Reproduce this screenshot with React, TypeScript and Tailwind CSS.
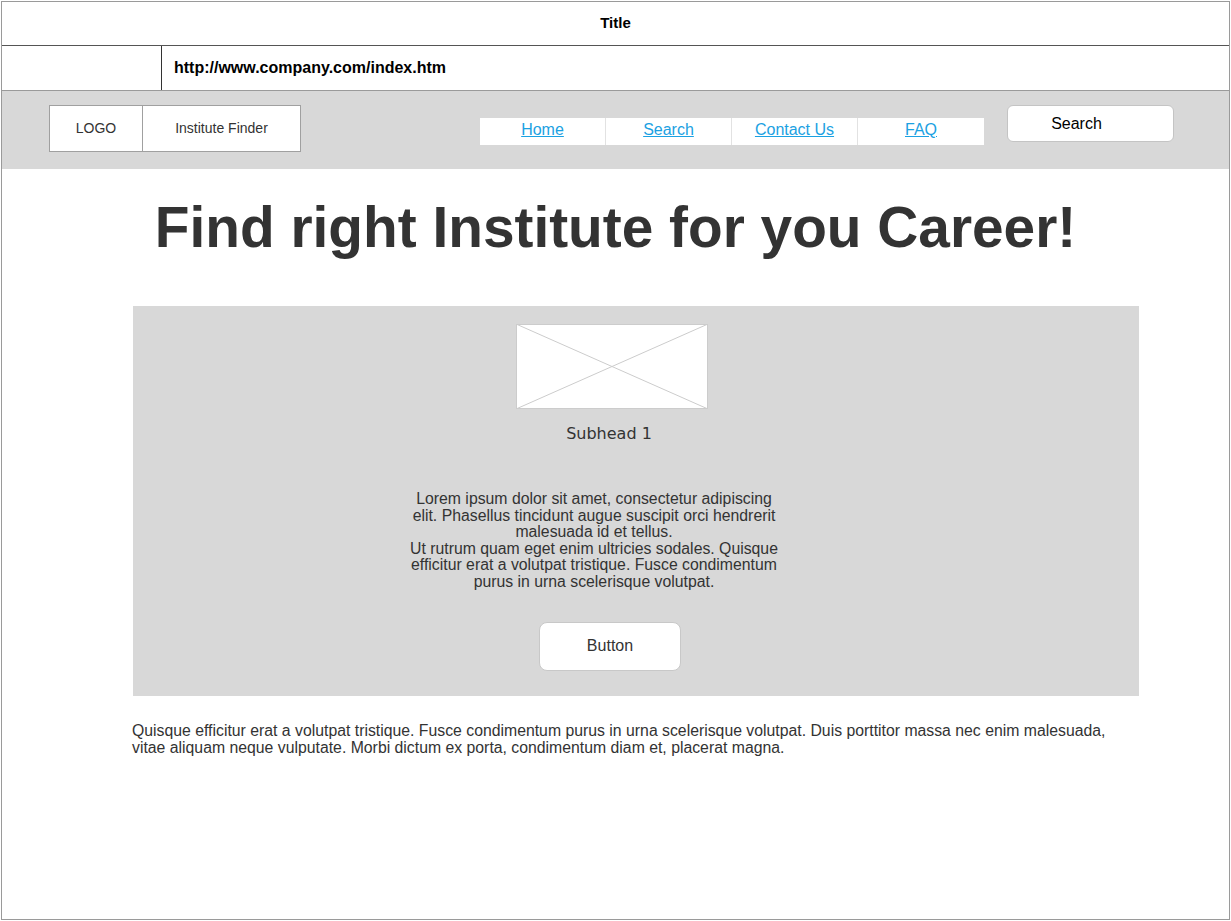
import React from "react";

function Placeholder() {
  return (
    <svg width="192" height="85" viewBox="0 0 192 85" className="block">
      <rect x="0.5" y="0.5" width="191" height="84" fill="#ffffff" stroke="#cccccc" />
      <line x1="0" y1="0" x2="192" y2="85" stroke="#cccccc" />
      <line x1="192" y1="0" x2="0" y2="85" stroke="#cccccc" />
    </svg>
  );
}

export default function App() {
  const links = ["Home", "Search", "Contact Us", "FAQ"];

  return (
    <div className="w-[1231px] h-[921px] bg-white p-px font-['Liberation_Sans',Arial,sans-serif]">
      <div className="w-[1229px] h-[919px] border border-[#9a9a9a] flex flex-col text-[#333333]">
        {/* window title */}
        <div className="h-[44px] flex items-center justify-center border-b border-[#555555] text-[15px] font-bold text-black">
          Title
        </div>
        {/* address bar */}
        <div className="h-[45px] flex border-b border-[#9a9a9a]">
          <div className="w-[160px] border-r border-[#333333]" />
          <div className="flex items-center pl-3 pb-px text-[16px] font-bold text-black">http://www.company.com/index.htm</div>
        </div>

        {/* nav band */}
        <div className="h-[78px] bg-[#d8d8d8] flex items-start pt-[14px] pl-[47px]">
          <div className="flex">
            <div className="w-[94px] h-[47px] bg-white border border-[#a0a0a0] flex items-center justify-center pb-px text-[14px]">LOGO</div>
            <div className="w-[158px] h-[47px] bg-white border border-l-0 border-[#a0a0a0] flex items-center justify-center pb-px text-[14px]">
              Institute Finder
            </div>
          </div>
          <div className="ml-[179px] mt-[13px] flex bg-white h-[27px]">
            {links.map((l, i) => (
              <div
                key={l}
                className={
                  "w-[126px] flex items-center justify-center pb-[3px] text-[16px] text-[#1ba1e2] underline " +
                  (i < 3 ? "border-r border-[#e2e2e2]" : "")
                }
              >
                {l}
              </div>
            ))}
          </div>
          <div className="ml-[23px] w-[167px] h-[37px] bg-white border border-[#c4c4c4] rounded-md flex items-center justify-center pr-[28px] text-[16px] text-black">
            Search
          </div>
        </div>

        {/* heading */}
        <h1 className="mt-[29px] text-center text-[56.8px] font-bold leading-[60px] text-[#333333]">
          Find right Institute for you Career!
        </h1>

        {/* hero panel */}
        <div className="mt-[48px] ml-[131px] w-[1006px] h-[390px] bg-[#d8d8d8] flex flex-col items-center pt-[18px] pr-[48px]">
          <Placeholder />
          <div className="mt-[13px] mr-[6px] text-[16px] font-['DejaVu_Sans',Verdana,sans-serif] text-[#333333]">Subhead 1</div>
          <div className="mt-[45px] mr-[36px] w-[376px] text-center text-[15.8px] leading-[16.6px] text-[#333333]">
            <p>Lorem ipsum dolor sit amet, consectetur adipiscing elit. Phasellus tincidunt augue suscipit orci hendrerit malesuada id et tellus.</p>
            <p>Ut rutrum quam eget enim ultricies sodales. Quisque efficitur erat a volutpat tristique. Fusce condimentum purus in urna scelerisque volutpat.</p>
          </div>
          <button className="mt-[31px] mr-[4px] w-[142px] h-[49px] bg-white border border-[#c8c8c8] rounded-lg text-[16px] text-[#333333]">
            Button
          </button>
        </div>

        {/* body text */}
        <p className="mt-[27px] ml-[130px] w-[990px] text-[15.8px] leading-[16.5px] text-[#333333]">
          Quisque efficitur erat a volutpat tristique. Fusce condimentum purus in urna scelerisque volutpat. Duis porttitor massa nec enim malesuada, vitae aliquam neque vulputate. Morbi dictum ex porta, condimentum diam et, placerat magna.
        </p>
      </div>
    </div>
  );
}
